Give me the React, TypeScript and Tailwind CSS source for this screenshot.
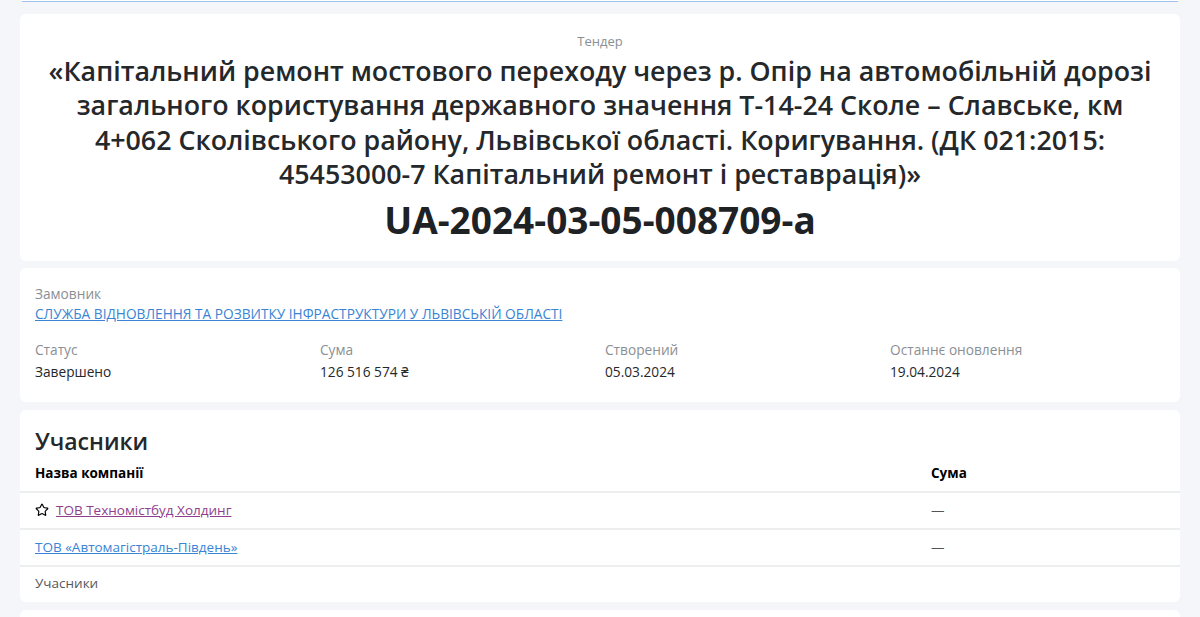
import { Star } from "lucide-react";

/* Дані тендера */
const meta = [
    { label: "Статус", value: "Завершено" },
    { label: "Сума", value: "126 516 574 ₴" },
    { label: "Створений", value: "05.03.2024" },
    { label: "Останнє оновлення", value: "19.04.2024" },
];

const participants = [
    { name: "ТОВ Техномістбуд Холдинг", visited: true, starred: true },
    { name: "ТОВ «Автомагістраль-Південь»", visited: false, starred: false },
];

export default function App() {
    return (
        <div
            className="min-h-[617px] bg-[#f4f6f9] px-5 text-[#212529]"
            style={{ fontFamily: '"Open Sans", "Noto Sans", sans-serif' }}
        >
            {/* ── Кінець попереднього блоку ───────────── */}
            <div className="mx-[2px] h-[2px] bg-white border-b border-[#9fc4ec]" />

            {/* ── Заголовок тендера ───────────────────── */}
            <section className="mt-3 rounded-md bg-white px-6 pt-[17px] pb-[21px] text-center">
                <div className="text-[13px] leading-5 text-[#8a8f94]">Тендер</div>
                <h1 className="mt-[3px] text-[26.8px] font-semibold leading-[34.3px] text-[#25282b]">
                    «Капітальний ремонт мостового переходу через р. Опір на автомобільній дорозі
                    загального користування державного значення Т-14-24 Сколе – Славське, км
                    4+062 Сколівського району, Львівської області. Коригування. (ДК 021:2015:
                    45453000-7 Капітальний ремонт і реставрація)»
                </h1>
                <div className="mt-[9px] text-[37px] font-bold leading-[40px] text-[#1f2225]">
                    UA-2024-03-05-008709-a
                </div>
            </section>

            {/* ── Замовник і основні дані ─────────────── */}
            <section className="mt-[7px] rounded-md bg-white px-[15px] pt-[16px] pb-[20px] text-[13.7px]">
                <div className="leading-5 text-[#8a8f94]">Замовник</div>
                <a href="#" className="leading-5 text-[#3a84d4] underline">
                    СЛУЖБА ВІДНОВЛЕННЯ ТА РОЗВИТКУ ІНФРАСТРУКТУРИ У ЛЬВІВСЬКІЙ ОБЛАСТІ
                </a>
                <div className="mt-[15px] grid grid-cols-[285px_285px_285px_1fr]">
                    {meta.map((m) => (
                        <div key={m.label}>
                            <div className="leading-5 text-[#8a8f94]">{m.label}</div>
                            <div className="mt-[2px] leading-5 text-[#25282b]">{m.value}</div>
                        </div>
                    ))}
                </div>
            </section>

            {/* ── Учасники ────────────────────────────── */}
            <section className="mt-2 rounded-md bg-white pt-[17px] text-[13.5px]">
                <h2 className="px-[15px] text-[23px] font-semibold leading-7 text-[#25282b]">Учасники</h2>
                <table className="mt-[8px] w-full border-collapse">
                    <thead>
                        <tr className="border-b-2 border-[#eceef0]">
                            <th className="w-[911px] px-[15px] pb-[8px] text-left font-bold leading-5 text-black">
                                Назва компанії
                            </th>
                            <th className="pb-[8px] text-left font-bold leading-5 text-black">Сума</th>
                        </tr>
                    </thead>
                    <tbody>
                        {participants.map((p) => (
                            <tr key={p.name} className="h-[37px] border-b-2 border-[#eceef0]">
                                <td className="px-[15px]">
                                    <span className="flex items-center gap-[7px]">
                                        {p.starred && <Star size={14} strokeWidth={2} className="text-black" />}
                                        <a
                                            href="#"
                                            className={
                                                p.visited
                                                    ? "leading-5 text-[#8e3f8e] underline"
                                                    : "leading-5 text-[#3a84d4] underline"
                                            }
                                        >
                                            {p.name}
                                        </a>
                                    </span>
                                </td>
                                <td className="leading-5 text-[#555]">—</td>
                            </tr>
                        ))}
                    </tbody>
                </table>
                <div className="px-[15px] pt-[6px] pb-[9px] leading-5 text-[#55595e]">Учасники</div>
            </section>

            {/* ── Наступний блок ──────────────────────── */}
            <section className="mt-2 h-10 rounded-md bg-white" />
        </div>
    );
}
